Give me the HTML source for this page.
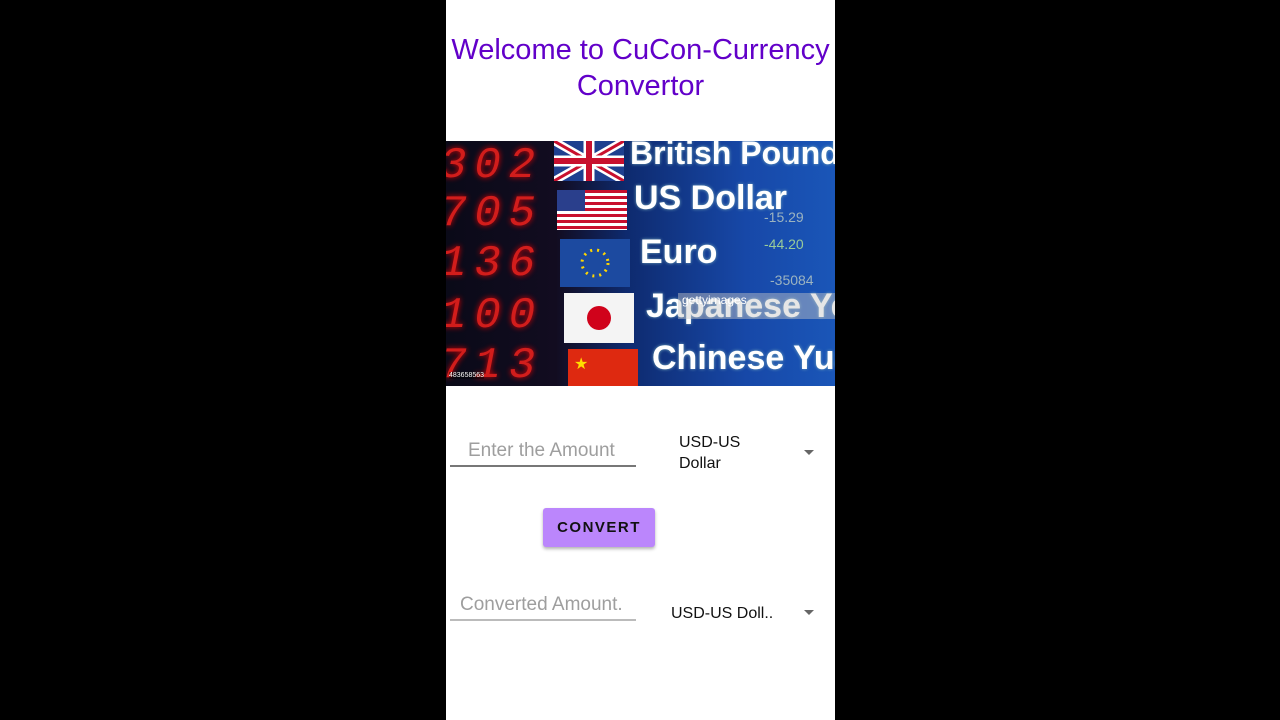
<!DOCTYPE html>
<html><head><meta charset="utf-8"><style>
body{margin:0;background:#000;width:1280px;height:720px;overflow:hidden;font-family:"Liberation Sans",sans-serif;}
.phone{position:absolute;left:446px;top:0;width:389px;height:720px;background:#fff;overflow:hidden}
.title{position:absolute;top:32px;left:0;width:389px;text-align:center;color:#6200c9;font-size:29px;line-height:36px}
.img{position:absolute;top:141px;left:0;width:389px;height:245px;overflow:hidden;background:linear-gradient(90deg,#0a0a18 0,#120c20 110px,#0e2a6e 180px,#1748a8 300px,#1a56b8 389px)}
.dig{position:absolute;color:#e8201c;font-family:"Liberation Mono",monospace;font-style:italic;font-size:44px;letter-spacing:8px;left:-6px;text-shadow:0 0 6px #f00;opacity:.9}
.flag{position:absolute;width:70px;height:40px}
.cur{position:absolute;color:#fff;font-weight:bold;font-size:34px;white-space:nowrap;text-shadow:0 0 3px #7ab}
.num{position:absolute;color:#9bb3c0;font-size:14px}
.in{position:absolute;color:#9e9e9e;font-size:19px}
.line{position:absolute;height:1px;background:#777}
.sel{position:absolute;color:#111;font-size:16px;line-height:21px}
.arr{position:absolute;width:0;height:0;border-left:5px solid transparent;border-right:5px solid transparent;border-top:5px solid #666}
.btn{position:absolute;left:97px;top:508px;width:112px;height:39px;background:#bb86fc;border-radius:3px;box-shadow:0 2px 3px rgba(0,0,0,.3);color:#111;font-size:15px;font-weight:bold;letter-spacing:1.5px;text-align:center;line-height:39px}
</style></head><body>
<div class="phone">
<div class="title">Welcome to CuCon-Currency<br>Convertor</div>
<div class="img">
<div class="dig" style="top:0">302</div>
<div class="dig" style="top:48px">705</div>
<div class="dig" style="top:98px">136</div>
<div class="dig" style="top:150px">100</div>
<div class="dig" style="top:200px">713</div>
<svg class="flag" style="left:108px;top:0" viewBox="0 0 70 40"><rect width="70" height="40" fill="#1e3f8f"/><path d="M0 0L70 40M70 0L0 40" stroke="#fff" stroke-width="8"/><path d="M0 0L70 40M70 0L0 40" stroke="#c8102e" stroke-width="3"/><path d="M35 0V40M0 20H70" stroke="#fff" stroke-width="11"/><path d="M35 0V40M0 20H70" stroke="#c8102e" stroke-width="6"/></svg>
<svg class="flag" style="left:111px;top:49px" viewBox="0 0 70 40"><rect width="70" height="40" fill="#fff"/><g fill="#c8102e"><rect y="0" width="70" height="3"/><rect y="6" width="70" height="3"/><rect y="12" width="70" height="3"/><rect y="18" width="70" height="3"/><rect y="24" width="70" height="3"/><rect y="30" width="70" height="3"/><rect y="36" width="70" height="3"/></g><rect width="28" height="21" fill="#2a3f8c"/></svg>
<svg class="flag" style="left:114px;top:98px;height:48px" viewBox="0 0 70 48"><rect width="70" height="48" fill="#1c4aa0"/><circle cx="35" cy="24" r="13" fill="none" stroke="#ffd700" stroke-width="3" stroke-dasharray="2 5"/></svg>
<svg class="flag" style="left:118px;top:152px;height:50px" viewBox="0 0 70 50"><rect width="70" height="50" fill="#f4f4f4"/><circle cx="35" cy="25" r="12" fill="#d0021b"/></svg>
<svg class="flag" style="left:122px;top:208px;height:40px" viewBox="0 0 70 40"><rect width="70" height="40" fill="#de2910"/><text x="6" y="20" fill="#ffde00" font-size="16">★</text></svg>
<div class="cur" style="left:184px;top:-6px;font-size:32px">British Pound</div>
<div class="cur" style="left:188px;top:38px">US Dollar</div>
<div class="cur" style="left:194px;top:92px">Euro</div>
<div class="cur" style="left:200px;top:146px">Japanese Yen</div>
<div class="cur" style="left:206px;top:198px">Chinese Yuan</div>
<div class="num" style="left:318px;top:68px">-15.29</div>
<div class="num" style="left:318px;top:95px;color:#9c9">-44.20</div>
<div class="num" style="left:324px;top:131px">-35084</div>
<div style="position:absolute;left:232px;top:152px;width:157px;height:26px;background:rgba(200,200,200,.45);color:#fff;font-size:12px;padding-left:4px">gettyimages</div>
<div style="position:absolute;left:3px;top:231px;color:#fff;font-size:7px;background:rgba(0,0,0,.4)">483658563</div>
</div>
<div class="in" style="left:22px;top:440px">Enter the Amount</div>
<div class="line" style="left:4px;top:465px;width:186px;height:2px"></div>
<div class="sel" style="left:233px;top:432px">USD-US<br>Dollar</div>
<div class="arr" style="left:358px;top:450px"></div>
<div class="btn">CONVERT</div>
<div class="in" style="left:14px;top:594px">Converted Amount.</div>
<div class="line" style="left:4px;top:619px;width:186px;background:#bbb;height:2px"></div>
<div class="sel" style="left:225px;top:603px">USD-US Doll..</div>
<div class="arr" style="left:358px;top:610px"></div>
</div>
</body></html>
